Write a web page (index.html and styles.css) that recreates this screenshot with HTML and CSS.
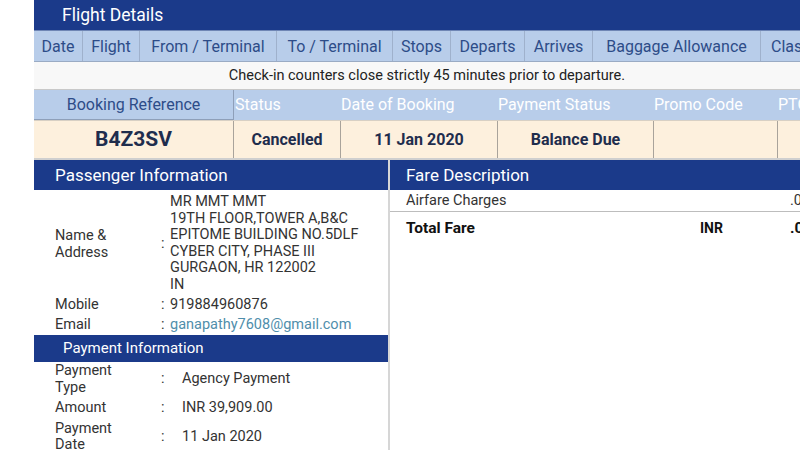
FILE: index.html
```html
<!DOCTYPE html>
<html>
<head>
<meta charset="utf-8">
<link rel="stylesheet" href="styles.css">
</head>
<body>
<div class="page">
  <div class="title-bar">Flight Details</div>
  <div class="row flight-head">
    <div class="fh c1">Date</div>
    <div class="fh c2">Flight</div>
    <div class="fh c3">From / Terminal</div>
    <div class="fh c4">To / Terminal</div>
    <div class="fh c5">Stops</div>
    <div class="fh c6">Departs</div>
    <div class="fh c7">Arrives</div>
    <div class="fh c8">Baggage Allowance</div>
    <div class="fh c9">Class</div>
  </div>
  <div class="notice">Check-in counters close strictly 45 minutes prior to departure.</div>
  <div class="row book-head">
    <div class="bh b1 ref-head">Booking Reference</div>
    <div class="bh b2">Status</div>
    <div class="bh b3">Date of Booking</div>
    <div class="bh b4">Payment Status</div>
    <div class="bh b5">Promo Code</div>
    <div class="bh b6">PTC</div>
  </div>
  <div class="row book-data">
    <div class="bd b1 ref">B4Z3SV</div>
    <div class="bd b2">Cancelled</div>
    <div class="bd b3">11 Jan 2020</div>
    <div class="bd b4">Balance Due</div>
    <div class="bd b5"></div>
    <div class="bd b6"></div>
  </div>
  <div class="lower">
    <div class="left">
      <div class="sec-head">Passenger Information</div>
      <div class="info">
        <div class="lbl">Name &amp;<br>Address</div>
        <div class="colon">:</div>
        <div class="val addr">MR MMT MMT<br>19TH FLOOR,TOWER A,B&amp;C<br>EPITOME BUILDING NO.5DLF<br>CYBER CITY, PHASE III<br>GURGAON, HR 122002<br>IN</div>
        <div class="lbl">Mobile</div>
        <div class="colon">:</div>
        <div class="val">919884960876</div>
        <div class="lbl">Email</div>
        <div class="colon">:</div>
        <div class="val email">ganapathy7608@gmail.com</div>
      </div>
      <div class="pay-head">Payment Information</div>
      <div class="info pay">
        <div class="lbl">Payment<br>Type</div>
        <div class="colon">:</div>
        <div class="val">Agency Payment</div>
        <div class="lbl one">Amount</div>
        <div class="colon">:</div>
        <div class="val">INR 39,909.00</div>
        <div class="lbl">Payment<br>Date</div>
        <div class="colon">:</div>
        <div class="val">11 Jan 2020</div>
      </div>
    </div>
    <div class="right">
      <div class="sec-head">Fare Description</div>
      <div class="fare-row">
        <div class="fname">Airfare Charges</div>
        <div class="fcur"></div>
        <div class="famt">.00</div>
      </div>
      <div class="fare-row total">
        <div class="fname">Total Fare</div>
        <div class="fcur">INR</div>
        <div class="famt">.00</div>
      </div>
    </div>
  </div>
</div>
</body>
</html>
```

FILE: styles.css
```css
html, body {
  margin: 0;
  padding: 0;
  background: #ffffff;
  overflow: hidden;
}
body {
  width: 800px;
  height: 450px;
  font-family: Roboto, "Liberation Sans", sans-serif;
  color: #333333;
}
.page {
  margin-left: 34px;
  width: 900px;
}
.title-bar {
  height: 30px;
  line-height: 30px;
  background: #1b3a8a;
  color: #ffffff;
  font-size: 17.5px;
  padding-left: 28px;
  border-bottom: 1px solid #6f86b5;
}
.row {
  display: flex;
}
.flight-head {
  height: 30px;
  background: #b8cdea;
  border-bottom: 1px solid #9aabc4;
}
.fh {
  box-sizing: border-box;
  height: 30px;
  line-height: 31px;
  font-size: 16px;
  color: #2d4c88;
  text-align: center;
  border-right: 1px solid #9fb1cc;
  white-space: nowrap;
  flex: none;
}
.c1 { width: 49px; }
.c2 { width: 57px; }
.c3 { width: 137px; }
.c4 { width: 116px; }
.c5 { width: 58px; }
.c6 { width: 74px; }
.c7 { width: 68px; }
.c8 { width: 168px; }
.c9 { width: 60px; text-align: left; padding-left: 10px; border-right: none; }
.notice {
  width: 786px;
  height: 27px;
  line-height: 27px;
  background: #f8f8f8;
  text-align: center;
  font-size: 14.5px;
  color: #222222;
  border-bottom: 1px solid #c9c9c9;
}
.book-head {
  height: 30px;
  background: #b8cdea;
}
.bh {
  box-sizing: border-box;
  height: 30px;
  line-height: 30px;
  font-size: 16px;
  color: #ffffff;
  white-space: nowrap;
  flex: none;
}
.ref-head {
  color: #2d4c88;
  text-align: center;
  border-right: 1px solid #8e9fb9;
  border-bottom: 1px solid #8e9fb9;
}
.b1 { width: 200px; }
.b2 { width: 107px; }
.b3 { width: 157px; }
.b4 { width: 156px; }
.b5 { width: 124px; }
.b6 { width: 100px; }
.b2.bh { padding-left: 1px; }
.book-data {
  height: 37px;
  background: #fdf0dd;
  border-top: 1px solid #d8d0c4;
  border-bottom: 2px solid #cfcfcf;
}
.bd {
  box-sizing: border-box;
  height: 37px;
  line-height: 37px;
  text-align: center;
  font-size: 16px;
  font-weight: bold;
  color: #1f2d4d;
  border-right: 1px solid #a9a39b;
  flex: none;
}
.bd.ref {
  font-size: 21px;
}
.lower {
  display: flex;
}
.left {
  width: 354px;
  flex: none;
  border-right: 2px solid #d6d6d6;
}
.right {
  width: 500px;
  flex: none;
}
.sec-head {
  height: 30px;
  line-height: 30px;
  background: #1b3a8a;
  color: #ffffff;
  font-size: 17px;
  padding-left: 21px;
}
.right .sec-head {
  padding-left: 16px;
}
.info {
  display: grid;
  grid-template-columns: 106px 9px 1fr;
  padding-left: 21px;
  font-size: 14.5px;
  line-height: 16.5px;
  color: #333333;
  align-items: center;
}
.info:not(.pay) {
  padding-top: 4px;
  padding-bottom: 0;
}
.info:not(.pay) .lbl,
.info:not(.pay) .val,
.info:not(.pay) .colon {
  min-height: 20px;
  display: flex;
  align-items: center;
}
.addr {
  display: block !important;
  padding-bottom: 2px;
}
.colon {
  text-align: left;
}
.email {
  color: #4f8eab;
}
.pay-head {
  height: 27px;
  line-height: 27px;
  background: #1b3a8a;
  color: #ffffff;
  font-size: 15px;
  padding-left: 29px;
}
.pay {
  grid-template-columns: 106px 21px 1fr;
  line-height: 16.5px;
  padding-top: 1px;
}
.pay .lbl {
  padding: 0;
}
.pay .lbl.one {
  padding: 4px 0;
}
.fare-row {
  display: grid;
  grid-template-columns: 294px 90px 1fr;
  padding-left: 16px;
  font-size: 14.5px;
  align-items: center;
}
.fare-row:not(.total) {
  height: 21px;
  border-bottom: 1px solid #bdbdbd;
}
.fare-row.total {
  height: 32px;
  font-weight: bold;
  font-size: 15.5px;
  color: #111111;
}
.fare-row.total .fcur {
  font-size: 14px;
}
.fname, .fcur, .famt {
  white-space: nowrap;
}
```
